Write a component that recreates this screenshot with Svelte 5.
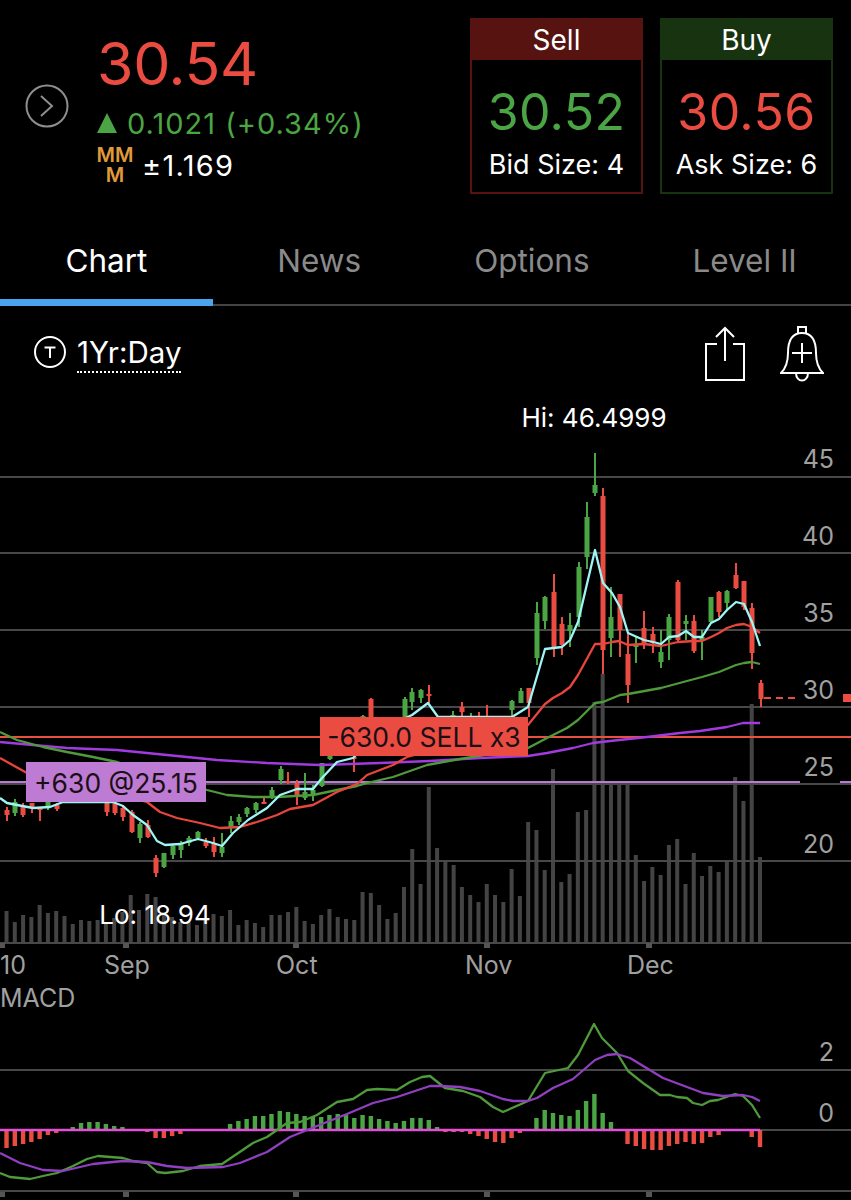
<script lang="ts">
  /**
   * Quote screen: price header, bid/ask boxes, tabs and the 1Yr:Day chart
   */

  const tabs = ['Chart', 'News', 'Options', 'Level II'];

  const STEP = 8.28;
  const LAST_X = 760;
  const barX = (i: number) => LAST_X - STEP * (91 - i);
  const pts = (list: number[][]) => list.map((p) => p.join(',')).join(' ');

  const gridY = [477, 553, 630, 707, 784, 861, 943];
  const axisY = [
    { label: '45', y: 468 },
    { label: '40', y: 545 },
    { label: '35', y: 622 },
    { label: '30', y: 699 },
    { label: '25', y: 776 },
    { label: '20', y: 853 }
  ];
  const months = [
    { label: '10', x: 0, tick: 2 },
    { label: 'Sep', x: 104, tick: 126 },
    { label: 'Oct', x: 276, tick: 296 },
    { label: 'Nov', x: 465, tick: 487 },
    { label: 'Dec', x: 627, tick: 649 }
  ];

  // top of each volume bar, the base is at 942
  const volumes = [
    911, 922, 915, 917, 905, 913, 911, 916, 924, 920, 921, 920, 922, 918, 912, 895, 910, 894, 897, 912, 917, 922, 922,
    925, 920, 914, 916, 910, 925, 920, 923, 927, 915, 915, 912, 907, 921, 924, 915, 909, 917, 919, 920, 892, 893, 905,
    919, 913, 887, 849, 884, 787, 848, 861, 865, 887, 895, 902, 884, 895, 902, 869, 896, 822, 830, 870, 769, 882, 874,
    812, 810, 702, 674, 785, 784, 784, 855, 881, 867, 875, 845, 839, 884, 853, 876, 866, 872, 860, 777, 801, 704, 857
  ];

  // x, high, body top, body bottom, low, up
  const candles: [number, number, number, number, number, boolean][] = [
    [7, 807, 810, 815, 821, false],
    [15, 799, 802, 813, 816, true],
    [23, 803, 806, 815, 817, false],
    [32, 803, 803, 808, 813, false],
    [40, 808, 808, 810, 821, false],
    [48, 802, 802, 808, 810, true],
    [57, 803, 805, 809, 811, false],
    [107, 802, 802, 812, 816, false],
    [115, 803, 803, 813, 815, false],
    [123, 805, 808, 817, 821, false],
    [132, 810, 812, 832, 833, false],
    [140, 822, 824, 838, 843, true],
    [148, 820, 825, 837, 838, false],
    [156, 855, 858, 873, 877, false],
    [164, 853, 853, 867, 868, true],
    [173, 845, 846, 855, 859, true],
    [181, 841, 843, 850, 858, true],
    [189, 836, 838, 843, 846, true],
    [198, 831, 832, 838, 839, true],
    [206, 838, 842, 846, 848, false],
    [214, 837, 843, 852, 857, false],
    [222, 833, 847, 853, 857, true],
    [231, 816, 821, 828, 833, true],
    [239, 814, 817, 822, 825, true],
    [247, 807, 808, 814, 817, true],
    [256, 802, 803, 810, 813, true],
    [264, 798, 802, 804, 804, false],
    [272, 787, 790, 797, 799, true],
    [281, 766, 769, 780, 784, true],
    [288, 772, 781, 783, 784, false],
    [297, 780, 783, 797, 805, false],
    [305, 773, 792, 798, 800, true],
    [313, 785, 790, 795, 801, true],
    [322, 763, 763, 786, 787, true],
    [330, 750, 755, 759, 760, true],
    [354, 757, 757, 759, 772, false],
    [363, 715, 716, 730, 735, true],
    [371, 698, 699, 725, 730, false],
    [405, 697, 699, 725, 730, true],
    [412, 688, 692, 702, 710, true],
    [421, 689, 690, 698, 703, true],
    [429, 685, 694, 696, 703, false],
    [453, 711, 715, 725, 730, true],
    [462, 702, 707, 712, 717, false],
    [471, 713, 717, 725, 730, true],
    [479, 712, 718, 725, 730, false],
    [487, 705, 720, 725, 730, false],
    [512, 700, 701, 710, 717, true],
    [521, 688, 691, 703, 703, true],
    [529, 688, 688, 703, 717, false],
    [537, 602, 613, 658, 665, true],
    [545, 596, 597, 621, 629, true],
    [554, 574, 592, 647, 657, false],
    [562, 617, 624, 645, 655, false],
    [570, 613, 625, 631, 647, true],
    [579, 562, 567, 617, 627, true],
    [587, 502, 517, 557, 569, true],
    [595, 453, 485, 493, 496, true],
    [603, 488, 496, 650, 674, false],
    [611, 587, 617, 638, 657, true],
    [620, 594, 594, 630, 657, false],
    [628, 633, 654, 685, 703, false],
    [636, 637, 645, 647, 663, true],
    [644, 611, 628, 643, 649, false],
    [653, 627, 634, 643, 653, false],
    [661, 630, 652, 662, 668, true],
    [669, 614, 617, 640, 660, true],
    [678, 580, 582, 640, 642, false],
    [686, 615, 621, 624, 640, true],
    [694, 615, 621, 651, 653, false],
    [702, 630, 637, 640, 660, true],
    [711, 597, 597, 622, 623, true],
    [719, 591, 592, 612, 617, false],
    [727, 590, 591, 603, 610, true],
    [736, 563, 575, 588, 589, false],
    [744, 581, 581, 607, 610, false],
    [752, 603, 608, 653, 669, false],
    [761, 680, 683, 699, 707, false]
  ];

  const cyanLine = [
    [0, 798], [7, 803], [17, 805], [33, 808], [50, 807], [63, 802], [113, 802], [123, 806], [133, 815], [147, 825],
    [157, 841], [165, 845], [180, 844], [198, 839], [213, 843], [222, 846], [233, 833], [248, 820], [267, 808],
    [280, 795], [297, 789], [313, 789], [322, 778], [337, 762], [353, 758], [380, 730], [412, 715], [428, 703],
    [438, 717], [512, 717], [528, 707], [545, 649], [562, 647], [570, 640], [578, 622], [595, 550], [603, 583],
    [612, 593], [620, 607], [628, 633], [637, 637], [644, 640], [653, 642], [661, 644], [669, 637], [678, 636],
    [686, 631], [694, 637], [702, 637], [711, 623], [719, 619], [727, 610], [736, 602], [744, 604], [752, 622],
    [760, 646]
  ];
  const redLine = [
    [0, 758], [27, 773], [147, 802], [160, 812], [177, 818], [200, 823], [220, 828], [240, 827], [257, 822],
    [277, 815], [290, 809], [313, 805], [337, 792], [357, 784], [367, 775], [393, 765], [407, 757], [528, 725],
    [545, 704], [553, 698], [562, 693], [570, 687], [578, 675], [595, 644], [603, 644], [612, 642], [619, 641],
    [628, 645], [644, 644], [661, 646], [678, 642], [694, 641], [702, 641], [711, 637], [719, 633], [727, 628],
    [736, 625], [744, 624], [752, 627], [760, 633]
  ];
  const greenLine = [
    [0, 732], [17, 740], [43, 747], [67, 752], [93, 757], [117, 762], [207, 790], [227, 795], [253, 797], [277, 797],
    [313, 795], [337, 790], [357, 786], [367, 783], [393, 777], [427, 765], [460, 759], [528, 748], [547, 738],
    [567, 728], [578, 720], [595, 703], [603, 702], [620, 695], [628, 694], [661, 688], [687, 681], [702, 677],
    [719, 672], [736, 665], [744, 663], [752, 662], [760, 664]
  ];
  const purpleLine = [
    [0, 742], [33, 745], [67, 748], [117, 750], [167, 755], [217, 760], [267, 763], [320, 765], [380, 763], [430, 761],
    [480, 758], [528, 756], [547, 753], [573, 748], [593, 743], [610, 741], [647, 737], [680, 733], [700, 731],
    [727, 727], [743, 723], [760, 723]
  ];

  // MACD histogram, height above or below the zero line
  const histogram = [
    -18, -16, -14, -12, -9, -5, -3, 1, 3, 7, 8, 8, 6, 4, 3, 0.5, 0.5, -2, -8, -8, -6, -4, 0, 1, 1, 1, 1, 6, 9, 11, 14, 14,
    16, 19, 18, 16, 14, 13, 13, 15, 16, 15, 12, 15, 14, 11, 9, 7, 9, 12, 12, 10, 3, -2, -2, -2, -4, -6, -9, -12, -13, -8,
    -3, 0, 12, 20, 17, 15, 14, 20, 29, 36, 17, 8, 0, -14, -16, -19, -20, -20, -16, -14, -12, -14, -13, -7, -5, 0, 1, 0,
    -7, -17
  ];
  const macdGreen = [
    [0, 1173], [10, 1177], [30, 1179], [43, 1176], [57, 1173], [73, 1166], [87, 1159], [98, 1156], [123, 1158],
    [133, 1161], [147, 1163], [157, 1172], [165, 1173], [183, 1171], [200, 1166], [222, 1164], [253, 1143],
    [267, 1137], [287, 1123], [300, 1122], [317, 1115], [337, 1102], [353, 1099], [367, 1090], [377, 1089],
    [397, 1090], [410, 1082], [422, 1077], [430, 1076], [445, 1088], [463, 1091], [480, 1097], [493, 1107],
    [503, 1112], [528, 1101], [545, 1073], [568, 1068], [578, 1055], [594, 1024], [602, 1038], [617, 1053],
    [628, 1071], [643, 1083], [660, 1095], [670, 1095], [677, 1097], [687, 1098], [693, 1103], [702, 1105],
    [710, 1101], [718, 1100], [735, 1094], [743, 1096], [752, 1105], [760, 1118]
  ];
  const macdPurple = [
    [0, 1153], [20, 1163], [43, 1170], [63, 1171], [93, 1164], [123, 1161], [147, 1162], [167, 1166], [187, 1168],
    [223, 1167], [240, 1163], [267, 1152], [290, 1137], [317, 1126], [347, 1114], [373, 1103], [397, 1097],
    [430, 1086], [440, 1086], [460, 1087], [480, 1091], [503, 1099], [513, 1101], [528, 1101], [537, 1098],
    [553, 1088], [573, 1079], [595, 1060], [607, 1055], [617, 1054], [630, 1058], [663, 1078], [703, 1093],
    [723, 1096], [743, 1095], [752, 1097], [760, 1101]
  ];
</script>

<main class="screen">
  <header class="header">
    <svg class="expand" width="44" height="44" viewBox="0 0 44 44" fill="none">
      <circle cx="22" cy="22" r="20.5" stroke="#8e8e8e" stroke-width="2" />
      <path d="M16 12 L27 22 L16 32" stroke="#8e8e8e" stroke-width="2" />
    </svg>

    <div class="quote">
      <div class="last">30.54</div>
      <div class="change">
        <svg width="20" height="20" viewBox="0 0 20 20"><path d="M10 0 L20 20 L0 20 Z" fill="#4ba544" /></svg>
        <span>0.1021 (+0.34%)</span>
      </div>
      <div class="move">
        <span class="mmm">MM<br />M</span>
        <span>±1.169</span>
      </div>
    </div>

    <div class="box sell">
      <div class="box-head">Sell</div>
      <div class="box-price up">30.52</div>
      <div class="box-size">Bid Size: 4</div>
    </div>
    <div class="box buy">
      <div class="box-head">Buy</div>
      <div class="box-price down">30.56</div>
      <div class="box-size">Ask Size: 6</div>
    </div>
  </header>

  <nav class="tabs">
    {#each tabs as tab, i}
      <div class="tab" class:active={i === 0}>{tab}</div>
    {/each}
  </nav>

  <div class="toolbar">
    <svg class="clock" width="34" height="34" viewBox="0 0 34 34" fill="none" stroke="#fff" stroke-width="2">
      <circle cx="17" cy="17" r="15" />
      <path d="M11.5 12.5 H22.5 M17 12.5 V23" />
    </svg>
    <span class="range">1Yr:Day</span>
    <span class="spacer"></span>
    <svg width="42" height="56" viewBox="0 0 42 56" fill="none" stroke="#fff" stroke-width="2">
      <path d="M13 18 H2 V54 H40 V18 H29" />
      <path d="M21 35 V2 M12 11 L21 2 L30 11" />
    </svg>
    <svg class="bell" width="44" height="56" viewBox="0 0 44 56" fill="none" stroke="#fff" stroke-width="2">
      <path d="M18 7 V1 H26 V7" />
      <path d="M1 47 C6 42 8 36 8 27 C8 13 13 7 22 7 C31 7 36 13 36 27 C36 36 38 42 43 47 Z" />
      <path d="M16 47 C16 57 28 57 28 47" />
      <path d="M22 17 V37 M12 27 H32" />
    </svg>
  </div>

  <svg class="chart" width="851" height="800" viewBox="0 400 851 800">
    {#each volumes as top, i}
      <rect x={barX(i) - 2} y={top} width="4" height={942 - top} fill="#444" />
    {/each}
    {#each gridY as y}
      <line x1="0" x2="851" y1={y} y2={y} stroke="#484848" stroke-width="2" />
    {/each}
    {#each months as m}
      <rect x={m.tick - 3} y="943" width="6" height="5" fill="#555" />
      <text x={m.x} y="974" class="axis">{m.label}</text>
    {/each}
    {#each axisY as a}
      <text x="834" y={a.y} text-anchor="end" class="axis price">{a.label}</text>
    {/each}

    <line x1="0" x2="851" y1="737" y2="737" stroke="#e8503f" stroke-width="2" />
    <line x1="0" x2="800" y1="782" y2="782" stroke="#b77bd6" stroke-width="2" />
    <line x1="840" x2="851" y1="782" y2="782" stroke="#b77bd6" stroke-width="2" />

    {#each candles as [x, hi, top, bottom, lo, up]}
      <line x1={x} x2={x} y1={hi} y2={lo} stroke={up ? '#4ba544' : '#ea4c41'} stroke-width="2" />
      <rect x={x - 2.5} y={top} width="5" height={bottom - top} fill={up ? '#4ba544' : '#ea4c41'} />
    {/each}

    <polyline points={pts(purpleLine)} class="line" stroke="#a33ae0" />
    <polyline points={pts(greenLine)} class="line" stroke="#4f9a3a" />
    <polyline points={pts(redLine)} class="line" stroke="#e8453c" />
    <polyline points={pts(cyanLine)} class="line" stroke="#9ef5f5" />

    <line x1="764" x2="797" y1="698" y2="698" stroke="#ea4c41" stroke-width="2" stroke-dasharray="7 5" />
    <rect x="843" y="694" width="8" height="8" fill="#ea4c41" />

    <rect x="26" y="762" width="180" height="40" fill="#bd7bd4" />
    <text x="116" y="793" text-anchor="middle" class="tag">+630 @25.15</text>
    <rect x="320" y="717" width="208" height="39" fill="#ea4c41" />
    <text x="424" y="747" text-anchor="middle" class="tag">-630.0 SELL x3</text>

    <text x="594" y="427" text-anchor="middle" class="extreme">Hi: 46.4999</text>
    <text x="155" y="924" text-anchor="middle" class="extreme">Lo: 18.94</text>

    <text x="0" y="1007" class="axis">MACD</text>
    <line x1="0" x2="851" y1="1070" y2="1070" stroke="#484848" stroke-width="2" />
    <line x1="0" x2="851" y1="1130" y2="1130" stroke="#484848" stroke-width="2" />
    <line x1="0" x2="851" y1="1191" y2="1191" stroke="#484848" stroke-width="2" />
    {#each months as m}
      <rect x={m.tick - 3} y="1192" width="6" height="5" fill="#555" />
    {/each}
    <text x="834" y="1061" text-anchor="end" class="axis price">2</text>
    <text x="834" y="1122" text-anchor="end" class="axis price">0</text>

    {#each histogram as h, i}
      {#if h !== 0}
        <rect
          x={barX(i) - 2.2}
          y={h > 0 ? 1130 - h : 1130}
          width="4.4"
          height={Math.abs(h)}
          fill={h > 0 ? '#4ba544' : '#ea4c41'}
        />
      {/if}
    {/each}
    <line x1="0" x2="760" y1="1130" y2="1130" stroke="#e050d8" stroke-width="2.5" />
    <polyline points={pts(macdGreen)} class="line" stroke="#4f9a3a" />
    <polyline points={pts(macdPurple)} class="line" stroke="#8f3fc0" />
  </svg>
</main>

<style>
  :global(body) {
    background: #000;
  }

  .screen {
    width: 851px;
    height: 1200px;
    overflow: hidden;
    background: #000;
    color: #fff;
    font-family: Inter, 'Liberation Sans', sans-serif;
  }

  .header {
    display: flex;
    align-items: flex-start;
    height: 222px;
    box-sizing: border-box;
    padding: 18px 18px 0 25px;
  }

  .expand {
    margin-top: 66px;
    flex: none;
  }

  .quote {
    flex: 1;
    margin-left: 28px;
    padding-top: 14px;
  }

  .last {
    font-size: 59px;
    line-height: 64px;
    color: #ea4c41;
    letter-spacing: -0.3px;
  }

  .change {
    display: flex;
    align-items: center;
    gap: 10px;
    height: 42px;
    margin-top: 6px;
    font-size: 29px;
    letter-spacing: 1px;
    color: #4ba544;
  }

  .move {
    display: flex;
    align-items: center;
    gap: 8px;
    height: 42px;
    font-size: 29px;
    letter-spacing: 1.3px;
  }

  .mmm {
    width: 38px;
    margin-left: -1px;
    text-align: center;
    font-size: 20px;
    font-weight: 600;
    letter-spacing: 0;
    line-height: 20px;
    color: #e09a3a;
  }

  .box {
    flex: none;
    width: 173px;
    height: 176px;
    box-sizing: border-box;
    border: 2px solid;
    text-align: center;
  }

  .sell {
    border-color: #57130f;
  }

  .buy {
    margin-left: 17px;
    border-color: #17330f;
  }

  .box-head {
    height: 40px;
    font-size: 28px;
    line-height: 40px;
  }

  .sell .box-head {
    background: #57130f;
  }

  .buy .box-head {
    background: #17330f;
  }

  .box-price {
    margin-top: 22px;
    font-size: 50px;
    letter-spacing: 0.4px;
    line-height: 60px;
  }

  .up {
    color: #4ba544;
  }

  .down {
    color: #ea4c41;
  }

  .box-size {
    margin-top: 7px;
    font-size: 27px;
    line-height: 32px;
  }

  .tabs {
    display: grid;
    grid-template-columns: repeat(4, 1fr);
    height: 84px;
    box-sizing: border-box;
    border-bottom: 2px solid #444;
  }

  .tab {
    height: 84px;
    box-sizing: border-box;
    padding-top: 20px;
    text-align: center;
    font-size: 31.5px;
    line-height: 38px;
    color: #8a8a8a;
  }

  .tab.active {
    color: #fff;
    border-bottom: 7px solid #4aa3ec;
  }

  .toolbar {
    display: flex;
    align-items: flex-start;
    height: 94px;
    box-sizing: border-box;
    padding: 20px 27px 0 33px;
  }

  .clock {
    margin-top: 9px;
  }

  .range {
    height: 37px;
    margin-top: 8px;
    margin-left: 10px;
    font-size: 29.5px;
    line-height: 36px;
    border-bottom: 2px dotted #fff;
  }

  .spacer {
    flex: 1;
  }

  .bell {
    margin-left: 34px;
  }

  .chart {
    display: block;
  }

  .line {
    fill: none;
    stroke-width: 2.3;
    stroke-linejoin: round;
  }

  .axis {
    font-size: 25px;
    fill: #a0a0a0;
  }

  .price {
    font-size: 25px;
  }

  .tag {
    font-size: 26.5px;
    fill: #1a0f14;
  }

  .extreme {
    font-size: 26px;
    fill: #fff;
  }
</style>
